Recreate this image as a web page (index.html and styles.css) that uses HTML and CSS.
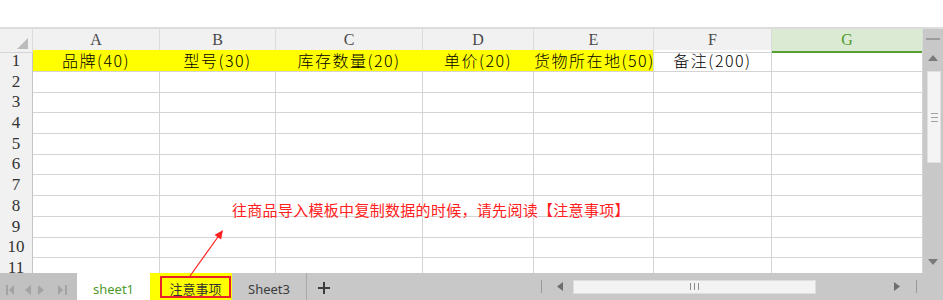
FILE: index.html
```html
<!DOCTYPE html>
<html lang="zh-CN">
<head>
  <meta charset="UTF-8" />
  <meta name="viewport" content="width=device-width, initial-scale=1.0" />
  <title>商品导入模板</title>
  <link rel="stylesheet" href="styles.css">
</head>
<body>
  <div class="app">
    <div class="topbar"></div>

    <div class="sheet">
      <div class="grid">
        <div class="row head">
          <div class="corner"></div>
          <div class="colhead">A</div>
          <div class="colhead">B</div>
          <div class="colhead">C</div>
          <div class="colhead">D</div>
          <div class="colhead">E</div>
          <div class="colhead">F</div>
          <div class="colhead selected">G</div>
        </div>
        <div class="row">
          <div class="rownum">1</div>
          <div class="cell title">品牌(40)</div>
          <div class="cell title">型号(30)</div>
          <div class="cell title">库存数量(20)</div>
          <div class="cell title">单价(20)</div>
          <div class="cell title last">货物所在地(50)</div>
          <div class="cell label">备注(200)</div>
          <div class="cell"></div>
        </div>
        <div class="row"><div class="rownum">2</div><div class="cell"></div><div class="cell"></div><div class="cell"></div><div class="cell"></div><div class="cell"></div><div class="cell"></div><div class="cell"></div></div>
        <div class="row"><div class="rownum">3</div><div class="cell"></div><div class="cell"></div><div class="cell"></div><div class="cell"></div><div class="cell"></div><div class="cell"></div><div class="cell"></div></div>
        <div class="row"><div class="rownum">4</div><div class="cell"></div><div class="cell"></div><div class="cell"></div><div class="cell"></div><div class="cell"></div><div class="cell"></div><div class="cell"></div></div>
        <div class="row"><div class="rownum">5</div><div class="cell"></div><div class="cell"></div><div class="cell"></div><div class="cell"></div><div class="cell"></div><div class="cell"></div><div class="cell"></div></div>
        <div class="row"><div class="rownum">6</div><div class="cell"></div><div class="cell"></div><div class="cell"></div><div class="cell"></div><div class="cell"></div><div class="cell"></div><div class="cell"></div></div>
        <div class="row"><div class="rownum">7</div><div class="cell"></div><div class="cell"></div><div class="cell"></div><div class="cell"></div><div class="cell"></div><div class="cell"></div><div class="cell"></div></div>
        <div class="row"><div class="rownum">8</div><div class="cell"></div><div class="cell"></div><div class="cell"></div><div class="cell"></div><div class="cell"></div><div class="cell"></div><div class="cell"></div></div>
        <div class="row"><div class="rownum">9</div><div class="cell"></div><div class="cell"></div><div class="cell"></div><div class="cell"></div><div class="cell"></div><div class="cell"></div><div class="cell"></div></div>
        <div class="row"><div class="rownum">10</div><div class="cell"></div><div class="cell"></div><div class="cell"></div><div class="cell"></div><div class="cell"></div><div class="cell"></div><div class="cell"></div></div>
        <div class="row"><div class="rownum">11</div><div class="cell"></div><div class="cell"></div><div class="cell"></div><div class="cell"></div><div class="cell"></div><div class="cell"></div><div class="cell"></div></div>
      </div>

      <div class="vscroll">
        <div class="vs-dash"></div>
        <svg class="vs-up" width="10" height="6" viewBox="0 0 10 6"><polygon points="5,0 10,6 0,6" fill="#7a7a7a"/></svg>
        <div class="vs-thumb">
          <span></span><span></span><span></span>
        </div>
        <svg class="vs-down" width="10" height="6" viewBox="0 0 10 6"><polygon points="0,0 10,0 5,6" fill="#7a7a7a"/></svg>
      </div>
    </div>

    <div class="tabbar">
      <svg class="tab-nav" width="77" height="27" viewBox="0 0 77 27">
        <rect x="6" y="12" width="2" height="10" fill="#a3a3a3"/>
        <polygon points="14,12 9,17 14,22" fill="#a3a3a3"/>
        <polygon points="31,12 25,17 31,22" fill="#a3a3a3"/>
        <polygon points="38,12 44,17 38,22" fill="#a3a3a3"/>
        <polygon points="58,12 63,17 58,22" fill="#a3a3a3"/>
        <rect x="65" y="12" width="2" height="10" fill="#a3a3a3"/>
      </svg>
      <div class="tab active">sheet1</div>
      <div class="tab notes"><span>注意事项</span></div>
      <div class="tab plain">Sheet3</div>
      <div class="tab-add">
        <svg width="14" height="14" viewBox="0 0 14 14"><path d="M7 1v12M1 7h12" stroke="#3c3c3c" stroke-width="2"/></svg>
      </div>
      <div class="hscroll">
        <div class="hs-sep"></div>
        <svg class="hs-left" width="6" height="9" viewBox="0 0 6 9"><polygon points="6,0 0,4.5 6,9" fill="#6e6e6e"/></svg>
        <div class="hs-thumb"><span></span><span></span><span></span></div>
        <svg class="hs-right" width="6" height="9" viewBox="0 0 6 9"><polygon points="0,0 6,4.5 0,9" fill="#6e6e6e"/></svg>
        <div class="hs-sep end"></div>
      </div>
    </div>

    <p class="note-text">往商品导入模板中复制数据的时候，请先阅读【注意事项】</p>
    <svg class="pointer" width="943" height="300" viewBox="0 0 943 300">
      <line x1="190" y1="276" x2="219" y2="235.5" stroke="#ff2020" stroke-width="1.2"/>
      <polygon points="223,230 221.1,239.6 214.5,235" fill="#ff2020"/>
    </svg>
  </div>
</body>
</html>
```

FILE: styles.css
```css
body {
  margin: 0;
  background: #fff;
  font-family: "Noto Sans", "Noto Sans CJK SC", sans-serif;
}
.app {
  position: relative;
  width: 943px;
  height: 300px;
  overflow: hidden;
}
.topbar {
  height: 27px;
  border-bottom: 2px solid #dcdcdc;
}
.sheet {
  display: flex;
  height: 244px;
}
.grid {
  flex: 1;
  overflow: hidden;
}
.row {
  display: grid;
  grid-template-columns: 33px 127px 116px 147px 111px 120px 118px 151px;
  height: 20.7px;
}
.row > div {
  box-sizing: border-box;
  border-right: 1px solid #d4d4d4;
  border-bottom: 1px solid #d4d4d4;
}
.row.head {
  height: 21px;
  background: #f1f1f1;
}
.corner {
  position: relative;
  border-right-color: #dcdcdc !important;
}
.corner::after {
  content: "";
  position: absolute;
  right: 4px;
  bottom: 3px;
  border-style: solid;
  border-width: 0 0 11px 11px;
  border-color: transparent transparent #bcbcbc transparent;
}
.colhead {
  font-family: "Liberation Serif", serif;
  font-size: 16px;
  line-height: 22px;
  color: #4a4a4a;
  text-align: center;
  border-right-color: #dcdcdc !important;
}
.colhead.selected {
  background: #dbead3;
  color: #4f9a2c;
  border-bottom: 2px solid #55a030 !important;
}
.rownum {
  background: #f1f1f1;
  border-right-color: #c4c4c4 !important;
  border-bottom-color: #dcdcdc !important;
  font-family: "Liberation Serif", serif;
  font-size: 17px;
  line-height: 21px;
  color: #333;
  text-align: center;
}
.cell {
  font-family: "Noto Sans CJK SC", sans-serif;
  font-size: 16px;
  font-weight: 300;
  line-height: 20px;
  letter-spacing: 1.5px;
  color: #000;
  text-align: center;
  white-space: nowrap;
}
.cell.title {
  background: #ffff00;
  border-right-color: #ffff00;
}
.cell.title.last {
  border-right-color: #d4d4d4;
}

/* vertical scrollbar */
.vscroll {
  width: 20px;
  background: #c8c8c8;
  display: flex;
  flex-direction: column;
  align-items: center;
}
.vs-dash {
  width: 14px;
  height: 2px;
  margin-top: 9px;
  background: #9c9c9c;
}
.vs-up {
  margin-top: 15px;
}
.vs-thumb {
  box-sizing: border-box;
  width: 14px;
  height: 92px;
  margin-top: 10px;
  margin-left: 2px;
  background: #f4f4f4;
  border: 1px solid #e0e0e0;
  display: flex;
  flex-direction: column;
  align-items: center;
  justify-content: center;
  gap: 3px;
}
.vs-thumb span {
  width: 7px;
  height: 1px;
  background: #a0a0a0;
}
.vs-down {
  margin-top: auto;
  margin-bottom: 8px;
}

/* sheet tabs */
.tabbar {
  display: flex;
  height: 27px;
  background: #c8c8c8;
  font-size: 13px;
}
.tab-nav {
  flex: none;
  background: #c1c1c1;
}
.tab {
  box-sizing: border-box;
  display: flex;
  align-items: center;
  justify-content: center;
  padding-top: 4px;
}
.tab.active {
  width: 73px;
  background: #fff;
  color: #4f9a2c;
}
.tab.notes {
  width: 82px;
  background: #ffff00;
  padding: 3px 1px 2px 10px;
  align-items: stretch;
}
.tab.notes span {
  flex: 1;
  display: flex;
  align-items: center;
  justify-content: center;
  padding-top: 2px;
  border: 2px solid #e8202a;
  color: #333;
  font-family: "Noto Sans CJK SC", sans-serif;
}
.tab.plain {
  width: 75px;
  border-right: 1px solid #a9a9a9;
  color: #3c3c3c;
}
.tab-add {
  width: 34px;
  display: flex;
  align-items: center;
  justify-content: center;
  padding-top: 3px;
}
.hscroll {
  margin-left: auto;
  width: 402px;
  display: flex;
  align-items: center;
}
.hs-sep {
  width: 1px;
  height: 13px;
  background: #9a9a9a;
}
.hs-left {
  margin-left: 15px;
}
.hs-thumb {
  box-sizing: border-box;
  width: 243px;
  height: 14px;
  margin-left: 10px;
  background: #f3f3f3;
  border: 1px solid #dedede;
  display: flex;
  align-items: center;
  justify-content: center;
  gap: 3px;
}
.hs-thumb span {
  width: 1px;
  height: 7px;
  background: #8c8c8c;
}
.hs-right {
  margin-left: 78px;
}
.hs-sep.end {
  margin-left: 16px;
}

/* annotation over the grid */
.note-text {
  position: absolute;
  left: 232px;
  top: 200px;
  margin: 0;
  font-family: "Noto Sans CJK SC", sans-serif;
  font-size: 15px;
  line-height: 20px;
  letter-spacing: 0.3px;
  color: #ff2020;
  white-space: nowrap;
}
.pointer {
  position: absolute;
  left: 0;
  top: 0;
  pointer-events: none;
}
```
